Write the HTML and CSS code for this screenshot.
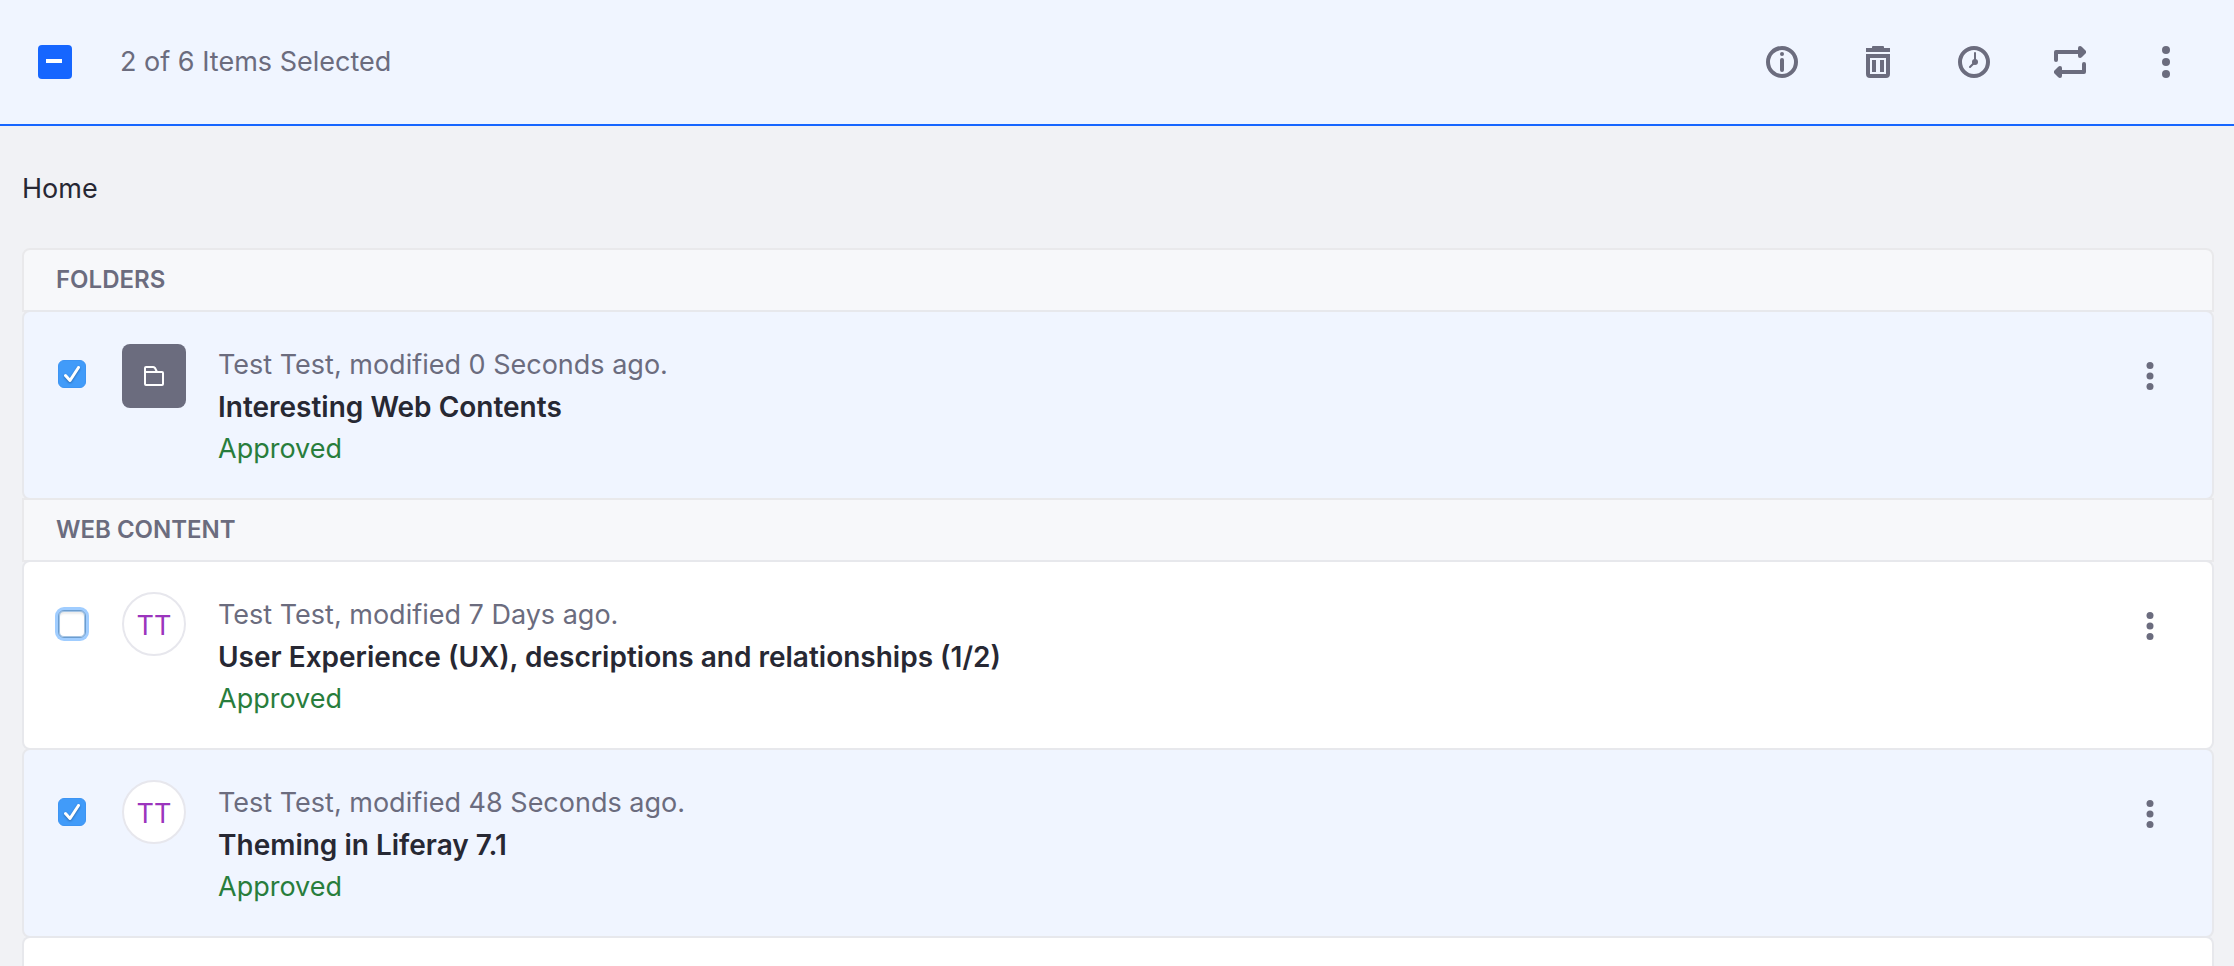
FILE: index.html
```html
<!DOCTYPE html>
<html lang="en">
<head>
<meta charset="utf-8">
<meta name="viewport" content="width=device-width, initial-scale=1">
<title>Web Content</title>
<link rel="stylesheet" href="styles.css">
</head>
<body>
<svg class="sprite" aria-hidden="true">
  <symbol id="ellipsis-v" viewBox="0 0 32 32"><circle cx="16" cy="4" r="4"/><circle cx="16" cy="16" r="4"/><circle cx="16" cy="28" r="4"/></symbol>
  <symbol id="check" viewBox="0 0 28 28"><path d="M7.5 15.5 12 20.5 20.5 7.5" fill="none" stroke="currentColor" stroke-width="3" stroke-linecap="round" stroke-linejoin="round"/></symbol>
</svg>

<header class="toolbar">
  <label class="toolbar-select">
    <span class="check check-all">
      <input type="checkbox" id="select-all" checked>
      <svg viewBox="0 0 34 34" aria-hidden="true"><path d="M8 14h16v4H8z"/></svg>
    </span>
    <span>2 of 6 Items Selected</span>
  </label>
  <div class="toolbar-actions">
    <button class="icon-button" type="button" aria-label="Info">
      <svg viewBox="0 0 32 32"><circle cx="16" cy="16" r="14" fill="none" stroke="currentColor" stroke-width="4"/><circle cx="16" cy="8" r="2"/><rect x="14" y="12" width="4" height="14" rx="2"/></svg>
    </button>
    <button class="icon-button" type="button" aria-label="Delete">
      <svg viewBox="0 0 32 32"><path d="M4 2h6V1q0-1 1-1h10q1 0 1 1v1h6v4H4z"/><path fill-rule="evenodd" d="M4 8h24v20q0 4-4 4H8q-4 0-4-4zM8 12v16h16V12z"/><path d="M10 14h4v12h-4zM18 14h4v12h-4z"/></svg>
    </button>
    <button class="icon-button" type="button" aria-label="Expire">
      <svg viewBox="0 0 32 32"><circle cx="16" cy="16" r="14" fill="none" stroke="currentColor" stroke-width="4"/><circle cx="17" cy="16" r="3"/><path d="M17 7v9l-5 5" fill="none" stroke="currentColor" stroke-width="2" stroke-linecap="round"/></svg>
    </button>
    <button class="icon-button" type="button" aria-label="Move">
      <svg viewBox="0 0 32 32"><g fill="none" stroke="currentColor" stroke-width="4" stroke-linecap="round" stroke-linejoin="round"><path d="M2 14V6h26"/><path d="M30 18v8H4"/></g><path d="M24 2q0-2 2-2 1 0 2 1l4 4q1 1 0 2l-4 4q-1 1-2 1-2 0-2-2zM8 22q0-2-2-2-1 0-2 1l-4 4q-1 1 0 2l4 4q1 1 2 1 2 0 2-2z"/></svg>
    </button>
    <button class="icon-button" type="button" aria-label="More actions">
      <svg><use href="#ellipsis-v"/></svg>
    </button>
  </div>
</header>

<main class="content">
  <nav class="breadcrumb" aria-label="Breadcrumb">Home</nav>

  <ul class="list">
    <li class="list-header">FOLDERS</li>
    <li class="list-item selected">
      <span class="check">
        <input type="checkbox" aria-label="Select Interesting Web Contents" checked>
        <svg aria-hidden="true"><use href="#check"/></svg>
      </span>
      <span class="sticker sticker-folder">
        <svg viewBox="0 0 20 20" aria-hidden="true"><g fill="none" stroke="currentColor" stroke-width="2" stroke-linejoin="round"><path d="M1 6V2q0-1 1-1h7q1 0 2 1l2 4"/><path d="M1 6h17q1 0 1 1v11q0 1-1 1H2q-1 0-1-1z"/></g></svg>
      </span>
      <div class="details">
        <p class="subtitle">Test Test, modified 0 Seconds ago.</p>
        <a class="title" href="#">Interesting Web Contents</a>
        <p class="status">Approved</p>
      </div>
      <button class="icon-button item-menu" type="button" aria-label="Actions"><svg><use href="#ellipsis-v"/></svg></button>
    </li>
    <li class="list-header">WEB CONTENT</li>
    <li class="list-item">
      <span class="check">
        <input class="focused" type="checkbox" aria-label="Select User Experience (UX), descriptions and relationships (1/2)">
      </span>
      <span class="sticker sticker-user">TT</span>
      <div class="details">
        <p class="subtitle">Test Test, modified 7 Days ago.</p>
        <a class="title" href="#">User Experience (UX), descriptions and relationships (1/2)</a>
        <p class="status">Approved</p>
      </div>
      <button class="icon-button item-menu" type="button" aria-label="Actions"><svg><use href="#ellipsis-v"/></svg></button>
    </li>
    <li class="list-item selected">
      <span class="check">
        <input type="checkbox" aria-label="Select Theming in Liferay 7.1" checked>
        <svg aria-hidden="true"><use href="#check"/></svg>
      </span>
      <span class="sticker sticker-user">TT</span>
      <div class="details">
        <p class="subtitle">Test Test, modified 48 Seconds ago.</p>
        <a class="title" href="#">Theming in Liferay 7.1</a>
        <p class="status">Approved</p>
      </div>
      <button class="icon-button item-menu" type="button" aria-label="Actions"><svg><use href="#ellipsis-v"/></svg></button>
    </li>
    <li class="list-rest"></li>
  </ul>
</main>
</body>
</html>
```

FILE: styles.css
```css
* {
  box-sizing: border-box;
}

body {
  display: flex;
  flex-direction: column;
  min-height: 100vh;
  margin: 0;
  background: #f1f2f5;
  color: #272833;
  font-family: Inter, "Liberation Sans", sans-serif;
  font-size: 27px;
  line-height: 42px;
}

p {
  margin: 0;
}

svg {
  display: block;
  fill: currentColor;
}

.sprite {
  display: none;
}

.toolbar {
  display: flex;
  align-items: center;
  justify-content: space-between;
  padding: 30px 36px 30px 38px;
  border-bottom: 2px solid #1666ff;
  background: #f0f5ff;
  color: #6b6c7e;
}

.toolbar-select {
  display: flex;
  align-items: center;
  gap: 48px;
}

.toolbar-actions {
  display: flex;
  gap: 32px;
}

.icon-button {
  display: grid;
  place-items: center;
  width: 64px;
  height: 64px;
  padding: 0;
  border: 0;
  background: none;
  color: #6b6c7e;
  cursor: pointer;
}

.icon-button svg {
  width: 32px;
  height: 32px;
}

.check {
  display: grid;
  flex: none;
  width: 28px;
  height: 28px;
  color: #fff;
}

.check > * {
  grid-area: 1 / 1;
  width: 100%;
  height: 100%;
}

.check svg {
  pointer-events: none;
  filter: drop-shadow(0 1px 1px #2766a8);
}

.check input {
  margin: 0;
  border: 1px solid #6c9dce;
  border-radius: 6px;
  appearance: none;
  background: #fff;
}

.check input:checked {
  border-color: #3d94f3;
  background: #419bf9;
}

.check input.focused {
  box-shadow: 0 0 0 3px #a0cdff, inset 0 0 0 1px #a5c4e4, inset 0 3px 2px #ececec;
}

.check-all {
  width: 34px;
  height: 34px;
}

.check-all input:checked {
  border: 0;
  border-radius: 4px;
  background: #1666ff;
}

.check-all svg {
  filter: none;
}

.content {
  display: flex;
  flex: 1;
  flex-direction: column;
  padding: 42px 20px 0 22px;
}

.breadcrumb {
  margin-bottom: 38px;
}

.list {
  display: flex;
  flex: 1;
  flex-direction: column;
  margin: 0;
  padding: 0;
  list-style: none;
}

.list-header {
  padding: 9px 32px;
  border: 2px solid #e9e9eb;
  background: #f7f8fa;
  color: #6b6c7e;
  font-size: 24px;
  font-weight: 600;
}

.list-header:first-child {
  border-radius: 8px 8px 0 0;
}

.list-item,
.list-rest {
  margin-top: -2px;
  border: 2px solid #e7e8ec;
  border-radius: 8px;
  background: #fff;
}

.list-item + .list-header {
  margin-top: -2px;
}

.list-item {
  display: flex;
  align-items: flex-start;
  padding: 32px 30px 28px 34px;
}

.list-item.selected {
  background: #f0f5ff;
}

.list-item .check {
  margin-top: 16px;
}

.list-rest {
  flex: 1;
  border-bottom: 0;
  border-radius: 8px 8px 0 0;
}

.sticker {
  display: grid;
  flex: none;
  place-items: center;
  width: 64px;
  height: 64px;
  margin: 0 32px 0 36px;
}

.sticker-folder {
  border-radius: 8px;
  background: #6b6c7e;
  color: #fff;
}

.sticker-folder svg {
  width: 20px;
  height: 20px;
}

.sticker-user {
  margin-top: -2px;
  padding-top: 4px;
  border: 2px solid #e7e7ed;
  border-radius: 50%;
  background: #fff;
  color: #9b35bd;
}

.details {
  flex: 1;
  min-width: 0;
}

.subtitle {
  color: #6b6c7e;
}

.title {
  display: block;
  color: #272833;
  font-size: 28px;
  font-weight: 600;
  font-optical-sizing: none;
  text-decoration: none;
}

.status {
  color: #287d3c;
}

.item-menu svg {
  width: 28px;
  height: 28px;
}
```
